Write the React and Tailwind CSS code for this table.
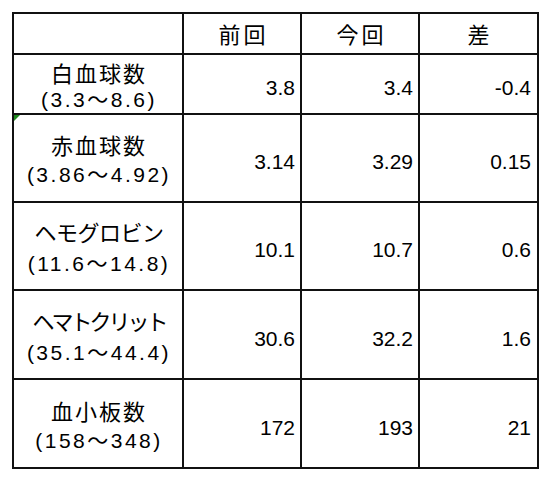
import React from "react";

const rows = [
  { name: "白血球数", range: "(3.3～8.6)", prev: "3.8", cur: "3.4", diff: "-0.4", h: "h-[60px]", lead: "leading-[25px]", tr: "tracking-[2px]" },
  { name: "赤血球数", range: "(3.86～4.92)", prev: "3.14", cur: "3.29", diff: "0.15", h: "h-[88px]", lead: "leading-[28px]", tr: "tracking-[2px]", flag: true },
  { name: "ヘモグロビン", range: "(11.6～14.8)", prev: "10.1", cur: "10.7", diff: "0.6", h: "h-[88px]", lead: "leading-[30px]", tr: "tracking-[-0.5px]" },
  { name: "ヘマトクリット", range: "(35.1～44.4)", prev: "30.6", cur: "32.2", diff: "1.6", h: "h-[89px]", lead: "leading-[30px]", tr: "tracking-[-3px]" },
  { name: "血小板数", range: "(158～348)", prev: "172", cur: "193", diff: "21", h: "h-[89px]", lead: "leading-[28px]", tr: "tracking-[2px]" },
];

const cell = "border-2 border-[#111] p-0";

export default function App() {
  return (
    <div className="w-[549px] h-[480px] bg-white pt-[12px] pl-[12px] text-black text-[21px] font-['Liberation_Sans','Noto_Sans_CJK_JP',sans-serif]">
      <table className="table-fixed border-collapse w-[525px]">
        <colgroup>
          <col className="w-[170px]" />
          <col className="w-[118px]" />
          <col className="w-[118px]" />
          <col className="w-[119px]" />
        </colgroup>
        <thead>
          <tr className="h-[41px]">
            <th className={cell}></th>
            <th className={`${cell} font-normal text-[22px] text-center pt-[4px] pl-[3px] tracking-[3px]`}>前回</th>
            <th className={`${cell} font-normal text-[22px] text-center pt-[4px] pl-[3px] tracking-[3px]`}>今回</th>
            <th className={`${cell} font-normal text-[22px] text-center pt-[4px]`}>差</th>
          </tr>
        </thead>
        <tbody>
          {rows.map((r) => (
            <tr key={r.name} className={r.h}>
              <td className={`${cell} relative text-center whitespace-nowrap pt-[6px] pl-[2px] ${r.lead}`}>
                {r.flag && (
                  <span className="absolute left-0 top-0 w-0 h-0 border-t-[6px] border-r-[6px] border-t-[#1e8a1e] border-r-transparent" />
                )}
                <div className={`text-[22px] ${r.tr}`}>{r.name}</div>
                <div className="text-[21px] tracking-[2.5px]">{r.range}</div>
              </td>
              <td className={`${cell} text-right pr-[5px] pt-[8px]`}>{r.prev}</td>
              <td className={`${cell} text-right pr-[5px] pt-[8px]`}>{r.cur}</td>
              <td className={`${cell} text-right pr-[6px] pt-[8px]`}>{r.diff}</td>
            </tr>
          ))}
        </tbody>
      </table>
    </div>
  );
}
